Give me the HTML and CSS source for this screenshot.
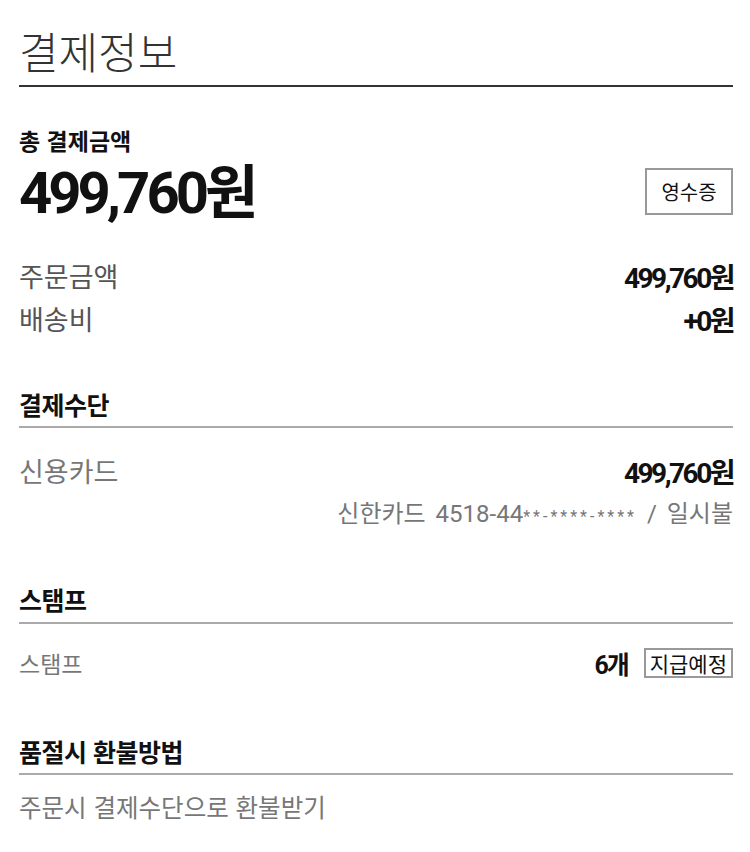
FILE: index.html
```html
<!DOCTYPE html>
<html lang="ko">
<head>
    <meta charset="utf-8">
    <meta name="viewport" content="width=device-width, initial-scale=1">
    <title>결제정보</title>
    <link rel="stylesheet" href="styles.css">
</head>
<body>
<div class="payment">
    <h1 class="page-title">결제정보</h1>

    <div class="total">
        <div class="total-label">총 결제금액</div>
        <div class="total-row">
            <span class="total-price">499,760원</span>
            <button class="btn-receipt" type="button">영수증</button>
        </div>
    </div>

    <div class="rows summary">
        <div class="row">
            <span class="label">주문금액</span>
            <span class="price">499,760원</span>
        </div>
        <div class="row">
            <span class="label">배송비</span>
            <span class="price">+0원</span>
        </div>
    </div>

    <div class="section method">
        <h2 class="section-title">결제수단</h2>
        <div class="rows">
            <div class="row">
                <span class="label light">신용카드</span>
                <span class="price">499,760원</span>
            </div>
            <div class="card-info">신한카드 4518-44<span class="mask">**-****-****</span> / 일시불</div>
        </div>
    </div>

    <div class="section stamps">
        <h2 class="section-title">스탬프</h2>
        <div class="rows">
            <div class="row">
                <span class="label light small">스탬프</span>
                <span class="stamp">
                    <span class="count">6개</span>
                    <span class="tag">지급예정</span>
                </span>
            </div>
        </div>
    </div>

    <div class="section refund-way">
        <h2 class="section-title">품절시 환불방법</h2>
        <div class="rows">
            <div class="refund">주문시 결제수단으로 환불받기</div>
        </div>
    </div>
</div>
</body>
</html>
```

FILE: styles.css
```css
body {
    margin: 0;
    background: #fff;
    font-family: "Noto Sans CJK KR", "Noto Sans", sans-serif;
    color: #111;
}
.payment {
    width: 714px;
    padding: 22px 17px 0 19px;
}
.page-title {
    margin: 0;
    font-size: 43px;
    font-weight: 300;
    color: #333;
    line-height: 56px;
    padding-bottom: 7px;
    border-bottom: 2px solid #333;
}
.total {
    margin-top: 39px;
}
.total-label {
    font-size: 23px;
    font-weight: 700;
    line-height: 28px;
}
.total-row {
    display: flex;
    justify-content: space-between;
    align-items: center;
    margin-top: 9px;
    height: 60px;
}
.total-price {
    font-family: Roboto, "Noto Sans CJK KR", sans-serif;
    font-size: 58px;
    font-weight: 700;
    letter-spacing: -4px;
    line-height: 60px;
}
.btn-receipt {
    width: 88px;
    height: 47px;
    margin-top: -4px;
    border: 2px solid #999;
    background: #fff;
    font-family: "Noto Sans CJK KR", sans-serif;
    font-size: 20px;
    color: #111;
    padding: 0;
}
.rows.summary {
    padding-top: 31px;
}
.row {
    display: flex;
    justify-content: space-between;
    align-items: center;
    height: 43px;
}
.label {
    font-size: 27px;
    color: #555;
}
.label.light {
    color: #777;
}
.label.small {
    font-size: 23px;
}
.price {
    font-family: Roboto, "Noto Sans CJK KR", sans-serif;
    font-size: 28px;
    font-weight: 700;
    letter-spacing: -2.5px;
}
.card-info {
    text-align: right;
    font-family: Roboto, "Noto Sans CJK KR", sans-serif;
    font-size: 24px;
    color: #777;
    line-height: 44px;
    word-spacing: 4px;
}
.mask {
    font-size: 16px;
    letter-spacing: 3px;
}
.section-title {
    margin: 0;
    font-size: 25px;
    font-weight: 700;
    line-height: 30px;
    letter-spacing: -0.5px;
    padding-bottom: 7px;
    border-bottom: 2px solid #aaa;
}
.method {
    margin-top: 49px;
}
.method .rows {
    padding-top: 21px;
}
.stamps {
    margin-top: 45px;
}
.stamps .section-title {
    padding-bottom: 8px;
}
.stamps .rows {
    padding-top: 17px;
}
.refund-way {
    margin-top: 52px;
}
.refund-way .rows {
    padding-top: 10px;
}
.stamp {
    display: flex;
    align-items: center;
    gap: 16px;
}
.count {
    font-family: Roboto, "Noto Sans CJK KR", sans-serif;
    font-size: 25px;
    font-weight: 700;
    letter-spacing: -2px;
}
.tag {
    border: 2px solid #999;
    font-size: 21px;
    line-height: 26px;
    padding: 0 4px;
    color: #111;
}
.refund {
    font-size: 24.5px;
    color: #777;
    line-height: 44px;
}
```
